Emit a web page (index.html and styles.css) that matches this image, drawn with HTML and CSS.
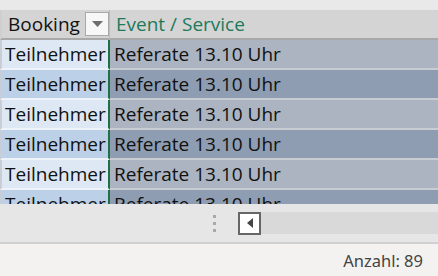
FILE: index.html
```html
<!DOCTYPE html>
<html lang="de">
<head>
    <meta charset="UTF-8">
    <title>Booking</title>
    <link rel="stylesheet" href="styles.css">
</head>
<body>
<div class="window">
    <div class="topband"></div>
    <div class="sheet">
        <div class="row head">
            <div class="cell c1">
                <span class="label">Booking</span>
                <span class="filter">
                    <svg width="11" height="6" viewBox="0 0 11 6"><polygon points="0,0 11,0 5.5,6" fill="#6d6d6d"/></svg>
                </span>
            </div>
            <div class="cell c2 green">Event / Service</div>
        </div>
        <div class="row odd"><div class="cell c1">Teilnehmer</div><div class="cell c2">Referate 13.10 Uhr</div></div>
        <div class="row even"><div class="cell c1">Teilnehmer</div><div class="cell c2">Referate 13.10 Uhr</div></div>
        <div class="row odd"><div class="cell c1">Teilnehmer</div><div class="cell c2">Referate 13.10 Uhr</div></div>
        <div class="row even"><div class="cell c1">Teilnehmer</div><div class="cell c2">Referate 13.10 Uhr</div></div>
        <div class="row odd"><div class="cell c1">Teilnehmer</div><div class="cell c2">Referate 13.10 Uhr</div></div>
        <div class="row even"><div class="cell c1">Teilnehmer</div><div class="cell c2">Referate 13.10 Uhr</div></div>
    </div>
    <div class="scrollarea">
        <div class="grip"><i></i><i></i><i></i></div>
        <div class="scrollbtn">
            <svg width="6" height="10" viewBox="0 0 6 10"><polygon points="6,0 6,10 0,5" fill="#444"/></svg>
        </div>
        <div class="track"></div>
    </div>
    <div class="status">Anzahl: 89</div>
</div>
</body>
</html>
```

FILE: styles.css
```css
*{
    box-sizing:border-box;
}
body{
    margin:0;
    background:#f3f2f1;
}
.window{
    width:438px;
    height:276px;
    display:flex;
    flex-direction:column;
    overflow:hidden;
}
.topband{
    height:10px;
    background:#e9e9e9;
}

.sheet{
    height:194px;
    overflow:hidden;
    font-family:"Open Sans", "Liberation Sans", sans-serif;
    font-size:19px;
    color:#111;
}
.row{
    display:flex;
    height:30px;
}
.cell{
    white-space:nowrap;
    overflow:hidden;
    line-height:28px;
}
.c1{
    width:110px;
    padding-left:3px;
    border-left:2px solid #c9ced6;
    border-right:2px solid #1e7145;
    border-bottom:2px solid #eef3f9;
}
.c2{
    flex:1;
    padding-left:4px;
    border-bottom:2px solid #c8ccd3;
}

.head .c1{
    display:flex;
    align-items:center;
    padding-left:6px;
    background:#d4d4d4;
    border-left-color:#cfcfcf;
    border-right:1px solid #bcbcbc;
    border-bottom-color:#a9a9a9;
}
.head .label{
    flex:1;
}
.filter{
    width:24px;
    height:24px;
    background:#f7f7f7;
    border:1px solid #a8a8a8;
    display:flex;
    align-items:center;
    justify-content:center;
}
.head .c2{
    padding-left:6px;
    background:#d4d4d4;
    border-bottom-color:#a9a9a9;
}
.green{
    color:#1d7a5b;
}

.odd .c1{
    background:#dde8f4;
}
.odd .c2{
    background:#abb4c0;
}
.even .c1{
    background:#bcd0e8;
}
.even .c2{
    background:#8e9db1;
}

.scrollarea{
    height:40px;
    background:#e6e6e6;
    border-bottom:2px solid #d0d0d0;
    display:flex;
    align-items:center;
    padding-left:213px;
}
.grip{
    display:flex;
    flex-direction:column;
    gap:4px;
    width:25px;
}
.grip i{
    width:3px;
    height:3px;
    background:#a9a9a9;
}
.scrollbtn{
    width:23px;
    height:23px;
    background:#fff;
    border:2px solid #666;
    display:flex;
    align-items:center;
    justify-content:center;
}
.track{
    flex:1;
    height:22px;
    background:#d9d9d9;
}

.status{
    flex:1;
    text-align:right;
    padding-right:15px;
    padding-top:5px;
    font-family:"Noto Sans", "Open Sans", sans-serif;
    font-size:16.5px;
    color:#444;
}
```
